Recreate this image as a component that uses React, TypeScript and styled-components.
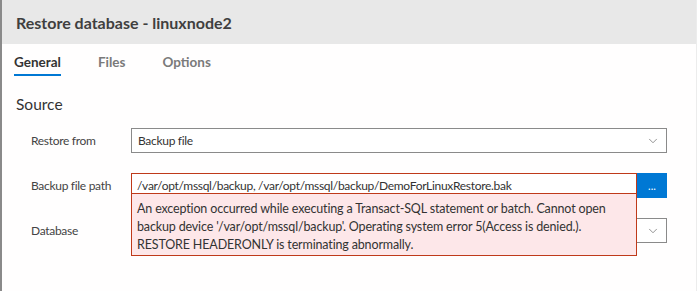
import styled, { createGlobalStyle } from "styled-components";
import { ChevronDown } from "lucide-react";

const GlobalStyle = createGlobalStyle`
  html, body {
    margin: 0;
    padding: 0;
    background: #ffffff;
  }
  body {
    font-family: Lato, "Noto Sans", sans-serif;
    color: #333333;
  }
`;

const Dialog = styled.div`
  width: 694px;
  height: 291px;
  border-left: 2px solid #8a8a8a;
  border-right: 1px solid #ececec;
  overflow: hidden;
  background: #fffefe;
`;

const Header = styled.div`
  height: 44px;
  background: #e8e8e8;
  display: flex;
  align-items: center;
  padding-left: 14px;
  font-size: 16px;
  font-weight: 700;
  color: #3f3f3f;
`;

const Tabs = styled.div`
  display: flex;
  gap: 37px;
  padding-left: 12px;
  height: 32px;
`;

const Tab = styled.div<{ $active?: boolean }>`
  font-size: 13.5px;
  font-weight: 700;
  color: ${(p) => (p.$active ? "#333333" : "#7a7a7a")};
  padding-top: 10px;
  box-sizing: border-box;
  border-bottom: 2px solid ${(p) => (p.$active ? "#0078d4" : "transparent")};
`;

const Section = styled.div`
  padding: 18px 0 0 14px;
`;

const SectionTitle = styled.div`
  font-size: 15.5px;
  line-height: 20px;
  color: #333333;
  margin-bottom: 14px;
`;

const Form = styled.div`
  display: flex;
  flex-direction: column;
  gap: 20px;
  padding-left: 15px;
`;

const Row = styled.div`
  display: flex;
  align-items: center;
  height: 25px;
`;

const Label = styled.div`
  width: 100px;
  font-size: 12px;
  letter-spacing: -0.3px;
  color: #444444;
`;

const Select = styled.div`
  width: 536px;
  height: 25px;
  box-sizing: border-box;
  border: 1px solid #8a8a8a;
  background: #ffffff;
  display: flex;
  align-items: center;
  justify-content: space-between;
  padding: 0 6px 0 6px;
  font-size: 12px;
  letter-spacing: -0.3px;
  color: #333333;
`;

const InputWrap = styled.div`
  position: relative;
  display: flex;
`;

const Input = styled.div`
  width: 506px;
  height: 25px;
  box-sizing: border-box;
  border: 1px solid #bf3a1a;
  background: #ffffff;
  padding: 4px 5px 0;
  font-size: 12px;
  letter-spacing: -0.3px;
  color: #333333;
`;

const BrowseButton = styled.div`
  width: 30px;
  height: 25px;
  background: #0078d4;
  color: #ffffff;
  font-size: 11px;
  display: flex;
  align-items: center;
  justify-content: center;
`;

const ErrorBox = styled.div`
  position: absolute;
  top: 20px;
  left: 0;
  width: 506px;
  box-sizing: border-box;
  border: 1px solid #bf3a1a;
  background: #fde7e9;
  padding: 6px 5px 1px;
  font-size: 12.5px;
  letter-spacing: -0.15px;
  line-height: 18px;
  color: #333333;
  z-index: 1;
`;

const Chevron = styled(ChevronDown)`
  color: #666666;
`;

export default function App() {
  return (
    <>
      <GlobalStyle />
      <Dialog>
        <Header>Restore database - linuxnode2</Header>
        <Tabs>
          <Tab $active>General</Tab>
          <Tab>Files</Tab>
          <Tab>Options</Tab>
        </Tabs>
        <Section>
          <SectionTitle>Source</SectionTitle>
          <Form>
            <Row>
              <Label>Restore from</Label>
              <Select>
                Backup file
                <Chevron size={14} strokeWidth={1.2} />
              </Select>
            </Row>
            <Row>
              <Label>Backup file path</Label>
              <InputWrap>
                <Input>
                  /var/opt/mssql/backup, /var/opt/mssql/backup/DemoForLinuxRestore.bak
                </Input>
                <BrowseButton>...</BrowseButton>
                <ErrorBox>
                  An exception occurred while executing a Transact-SQL statement or batch. Cannot open
                  backup device '/var/opt/mssql/backup'. Operating system error 5(Access is denied.).
                  RESTORE HEADERONLY is terminating abnormally.
                </ErrorBox>
              </InputWrap>
            </Row>
            <Row>
              <Label>Database</Label>
              <Select>
                <span />
                <Chevron size={14} strokeWidth={1.2} />
              </Select>
            </Row>
          </Form>
        </Section>
      </Dialog>
    </>
  );
}
